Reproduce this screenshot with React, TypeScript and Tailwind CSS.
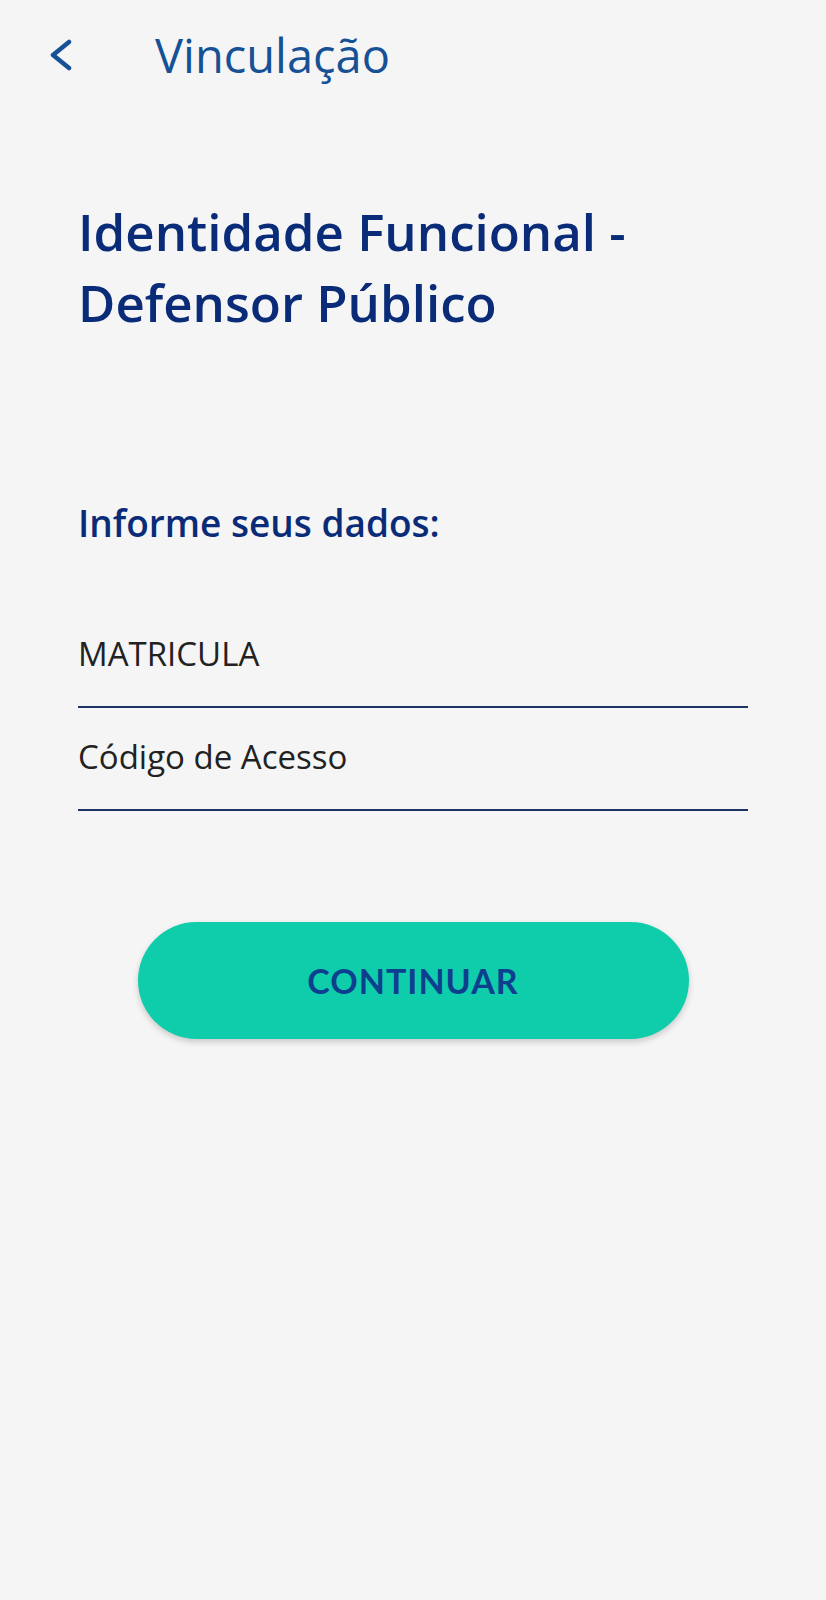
import React from 'react';

const Field = ({ label }: { label: string }) => (
  <div className="pt-[29px] pb-[32px] border-b-2 border-[#1b3463]">
    <span className="block text-[33px] leading-[40px] text-[#222222]">{label}</span>
  </div>
);

export default function App() {
  return (
    <div className="min-h-[1600px] w-full bg-[#f5f5f5] font-['Open_Sans',sans-serif]">
      {/* Top bar */}
      <div className="flex items-center pt-[25px] pl-[48px]">
        <svg width="24" height="34" viewBox="0 0 24 34" fill="none" className="text-[#165196]">
          <path d="M21 4 L5 17 L21 30" stroke="currentColor" strokeWidth="4.5" strokeLinecap="round" strokeLinejoin="round" />
        </svg>
        <h1 className="ml-[83px] text-[47px] leading-[60px] text-[#165196]">Vinculação</h1>
      </div>

      <div className="px-[78px]">
        <h2 className="mt-[111px] text-[51px] leading-[71px] font-semibold text-[#0a2c78]">
          Identidade Funcional -<br />Defensor Público
        </h2>

        <p className="mt-[159px] text-[37px] leading-[51px] font-semibold text-[#0a2c78]">Informe seus dados:</p>

        <div className="mt-[57px] flex flex-col">
          <Field label="MATRICULA" />
          <Field label="Código de Acesso" />
        </div>
      </div>

      <div className="mt-[111px] flex justify-center">
        <button className="w-[551px] h-[117px] rounded-full bg-[#0fcdab] shadow-[0_3px_6px_rgba(0,0,0,0.18)] flex items-center justify-center">
          <span className="font-['Lato',sans-serif] font-bold text-[34px] text-[#0d3f8f] tracking-[1px]">CONTINUAR</span>
        </button>
      </div>
    </div>
  );
}
